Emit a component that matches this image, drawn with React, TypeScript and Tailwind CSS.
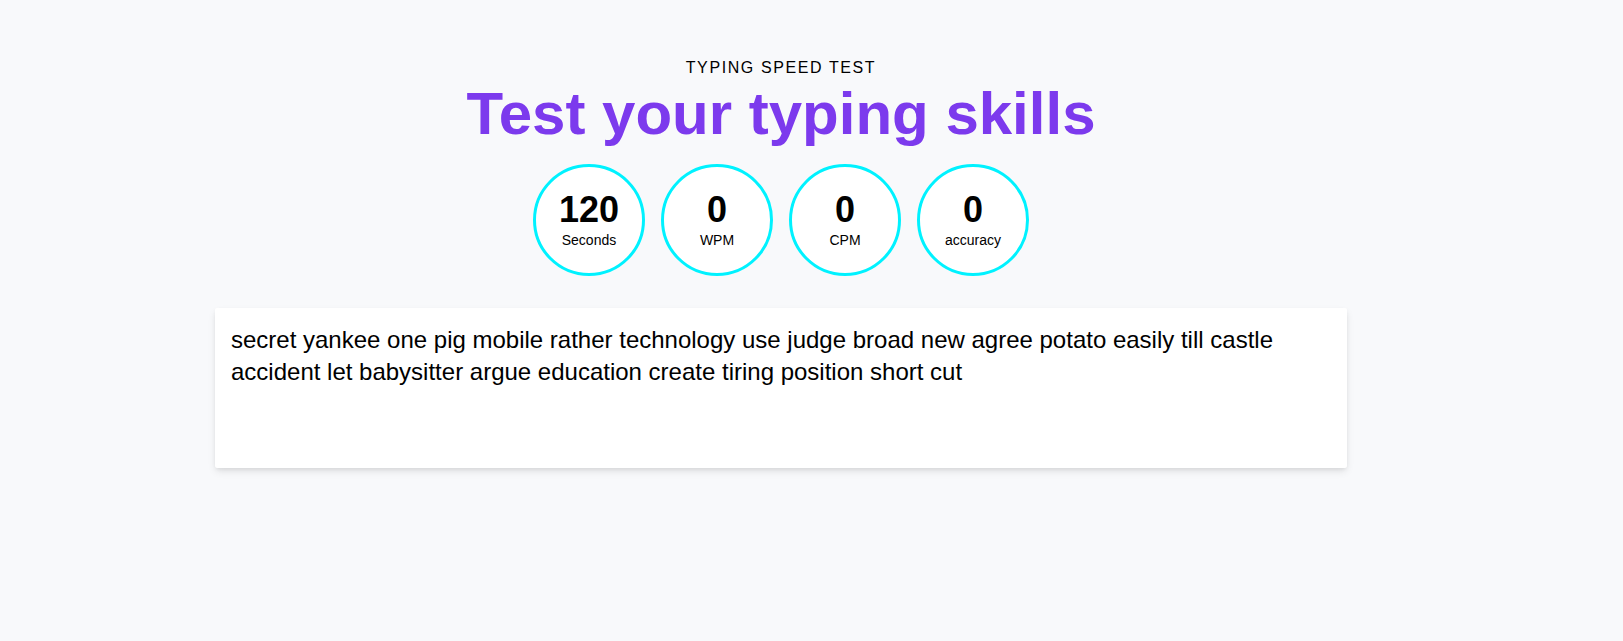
type Stat = { value: number; label: string };

const stats: Stat[] = [
  { value: 120, label: "Seconds" },
  { value: 0, label: "WPM" },
  { value: 0, label: "CPM" },
  { value: 0, label: "accuracy" },
];

const words =
  "secret yankee one pig mobile rather technology use judge broad new agree potato easily till castle accident let babysitter argue education create tiring position short cut";

function StatCircle({ value, label }: Stat) {
  return (
    <li className="flex size-28 flex-col items-center justify-center rounded-full border-3 border-[#00f2ff] bg-white">
      <span className="text-4xl font-bold">{value}</span>
      <span className="text-sm">{label}</span>
    </li>
  );
}

export default function App() {
  return (
    <div className="min-h-screen bg-[#f8f9fb] pt-14 pr-[61px] font-['Liberation_Sans',Arial,sans-serif] text-black">
      <main className="mx-auto w-full max-w-[1132px]">
        <header className="text-center">
          <p className="text-base tracking-widest uppercase">Typing speed test</p>
          <h1 className="mt-1 text-6xl font-bold text-[#7c3aed]">Test your typing skills</h1>
        </header>
        <ul className="mt-5 flex justify-center gap-4">
          {stats.map((stat) => (
            <StatCircle key={stat.label} value={stat.value} label={stat.label} />
          ))}
        </ul>
        <section
          aria-label="Words to type"
          className="mt-8 min-h-40 rounded-xs bg-white p-4 text-2xl shadow-[0_4px_8px_-1px_rgba(0,0,0,0.1),0_2px_4px_-1px_rgba(0,0,0,0.08)]"
        >
          <p>{words}</p>
        </section>
      </main>
    </div>
  );
}
